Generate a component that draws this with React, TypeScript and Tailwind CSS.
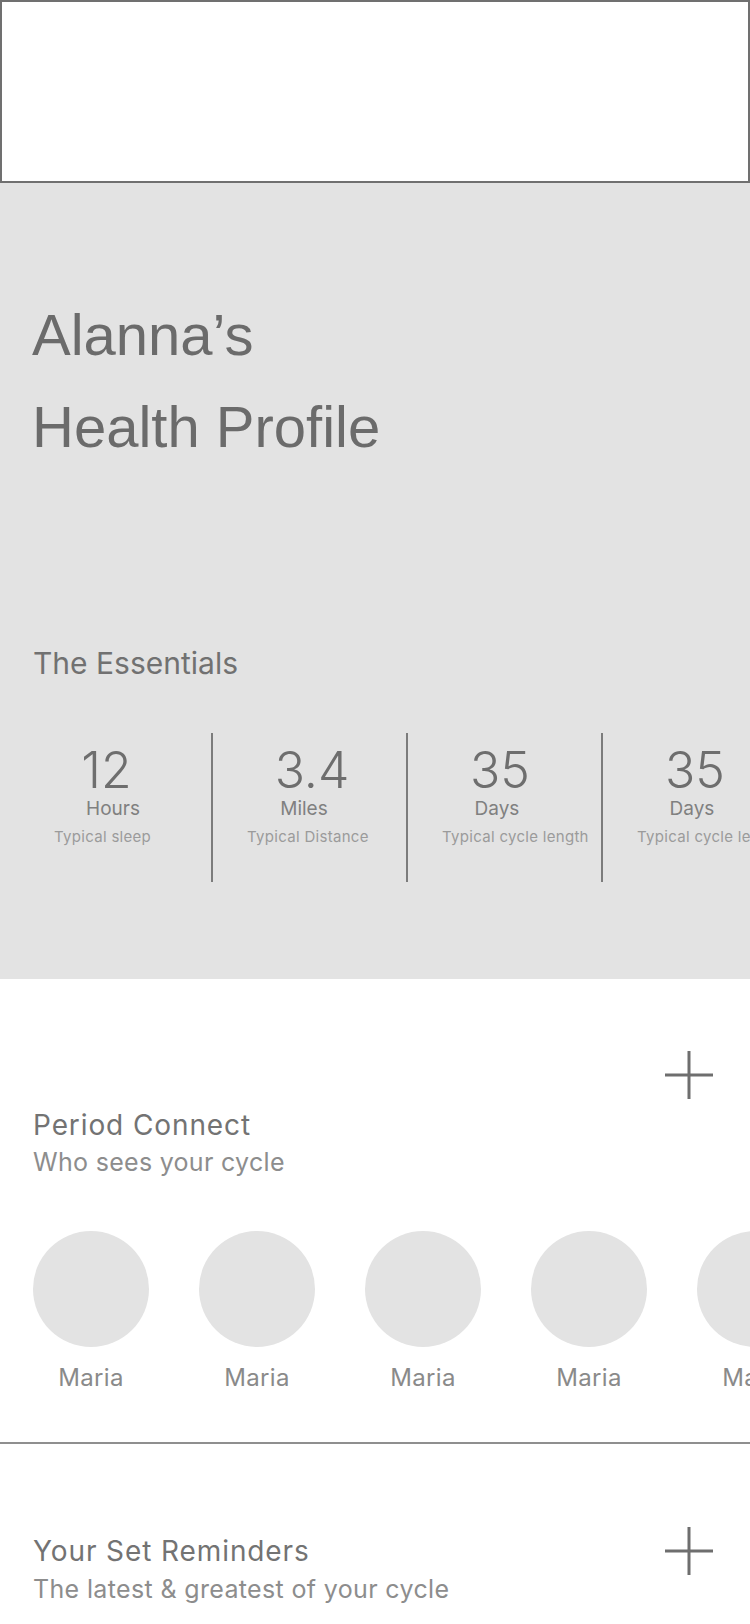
import React from "react";

// widths place each centred line where the mockup puts it
const stats = [
  { value: "12", unit: "Hours", label: "Typical sleep", col: "w-[211px]", num: "w-[213px]", unitW: "w-[226px]", pad: "pl-[54px]" },
  { value: "3.4", unit: "Miles", label: "Typical Distance", col: "w-[193px]", num: "w-[198px]", unitW: "w-[182px]", pad: "pl-[34px]" },
  { value: "35", unit: "Days", label: "Typical cycle length", col: "w-[193px]", num: "w-[184px]", unitW: "w-[178px]", pad: "pl-[34px]" },
  { value: "35", unit: "Days", label: "Typical cycle length", col: "w-[193px]", num: "w-[184px]", unitW: "w-[178px]", pad: "pl-[34px]" },
];

const contacts = ["Maria", "Maria", "Maria", "Maria", "Maria"];

function PlusIcon() {
  return (
    <svg width="48" height="48" viewBox="0 0 48 48" className="shrink-0">
      <path d="M24 0v48M0 24h48" stroke="#6e6e6e" strokeWidth="3" fill="none" />
    </svg>
  );
}

type StatProps = (typeof stats)[number];

function Stat({ value, unit, label, col, num, unitW, pad }: StatProps) {
  return (
    <div className={col + " shrink-0 flex flex-col items-start pt-[12px] whitespace-nowrap"}>
      <div className={num + " shrink-0 text-center text-[50px] leading-[50px] font-light text-[#6e6e6e]"}>{value}</div>
      <div className={unitW + " shrink-0 mt-[2px] text-center text-[19px] leading-[24px] text-[#808080]"}>{unit}</div>
      <div className={pad + " mt-[6px] text-[15px] leading-[20px] tracking-[0.3px] text-[#9b9b9b]"}>{label}</div>
    </div>
  );
}

export default function App() {
  return (
    <div className="w-[750px] min-h-[1624px] bg-white overflow-hidden font-['Inter',sans-serif]">
      {/* header placeholder */}
      <div className="h-[183px] border-2 border-[#707070] bg-white" />

      {/* profile summary */}
      <section className="bg-[#e3e3e3] pt-[106px] pb-[97px]">
        <h1 className="px-[32px] font-['Liberation_Sans',Arial,sans-serif] text-[58px] leading-[92px] text-[#6b6b6b]">
          Alanna’s
          <br />
          Health Profile
        </h1>
        <h2 className="mt-[172px] px-[33px] text-[30px] leading-[36px] text-[#717171]">The Essentials</h2>
        <div className="mt-[52px] flex overflow-hidden">
          {stats.map((s, i) => (
            <React.Fragment key={i}>
              {i > 0 && <div className="w-[2px] h-[149px] shrink-0 bg-[#7c7c7c]" />}
              <Stat {...s} />
            </React.Fragment>
          ))}
        </div>
      </section>

      {/* period connect */}
      <section className="pt-[72px]">
        <div className="flex justify-end pr-[37px]">
          <PlusIcon />
        </div>
        <div className="mt-[9px] px-[33px]">
          <h3 className="text-[28px] leading-[34px] tracking-[0.9px] text-[#737373]">Period Connect</h3>
          <p className="mt-[3px] text-[25px] leading-[34px] tracking-[0.3px] text-[#8d8d8d]">Who sees your cycle</p>
        </div>
        <div className="mt-[52px] flex gap-[50px] pl-[33px] overflow-hidden">
          {contacts.map((name, i) => (
            <div key={i} className="w-[116px] shrink-0 flex flex-col items-center">
              <div className="w-[116px] h-[116px] rounded-full bg-[#e3e3e3]" />
              <div className="mt-[16px] text-[24px] leading-[30px] tracking-[0.3px] text-[#8a8a8a]">{name}</div>
            </div>
          ))}
        </div>
        <div className="mt-[49px] h-[2px] bg-[#8f8f8f]" />
      </section>

      {/* reminders */}
      <section className="pt-[83px] pl-[33px] pr-[37px]">
        <div className="flex items-center justify-between h-[48px]">
          <h3 className="text-[28px] leading-[34px] tracking-[0.9px] text-[#737373]">Your Set Reminders</h3>
          <PlusIcon />
        </div>
        <p className="-mt-[3px] text-[25px] leading-[34px] tracking-[0.35px] text-[#8d8d8d]">
          The latest &amp; greatest of your cycle
        </p>
      </section>
    </div>
  );
}
